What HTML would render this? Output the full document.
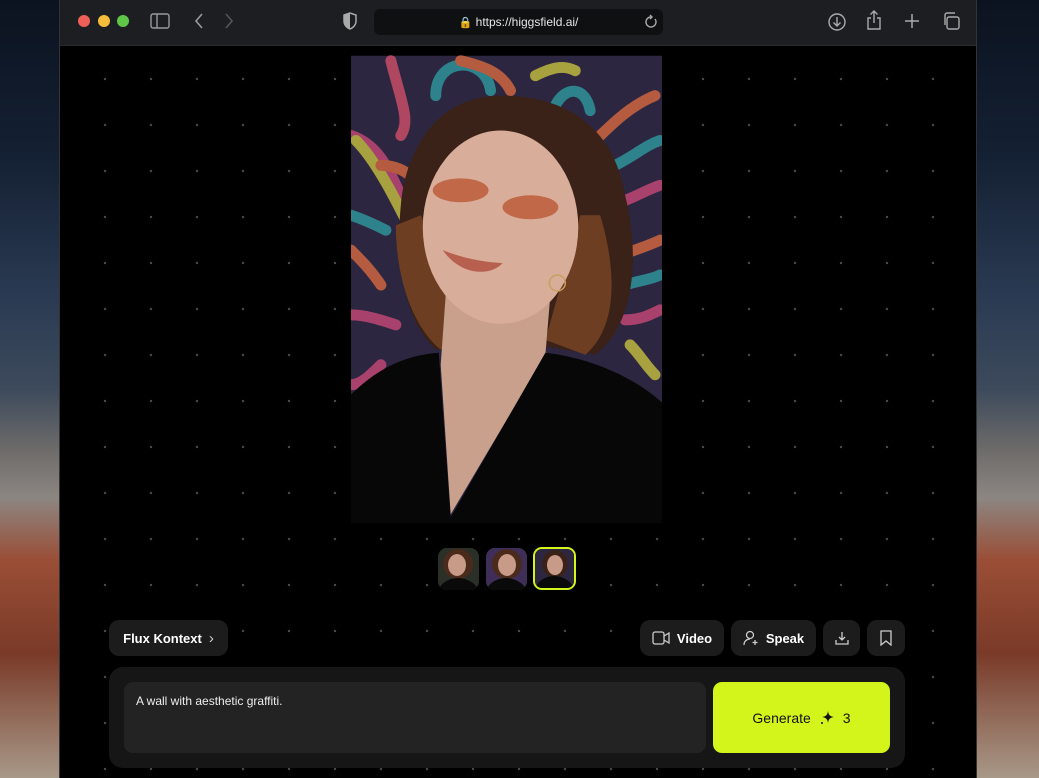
<!DOCTYPE html>
<html><head><meta charset="utf-8"><style>
*{margin:0;padding:0;box-sizing:border-box}
body{width:1039px;height:778px;overflow:hidden;position:relative;font-family:"Liberation Sans",sans-serif;
background:linear-gradient(180deg,#0c1320 0%,#142033 20%,#2a3a52 38%,#3d4a5c 50%,#6e6c6a 58%,#8c8682 64%,#9a4e36 72%,#7a3a28 84%,#a89888 100%)}
.win{position:absolute;left:59px;top:0;width:918px;height:778px;background:#000;border-left:1px solid #333;border-right:1px solid #333}
.bar{position:absolute;left:0;top:0;width:100%;height:46px;background:#1d1e21;border-bottom:1px solid #2a2b2e}
.dot{position:absolute;top:15px;width:12px;height:12px;border-radius:50%}
.url{position:absolute;left:314px;top:9px;width:289px;height:26px;background:#0f1012;border-radius:6px;color:#e5e5e5;font-size:12px;line-height:26px;text-align:center}
.content{position:absolute;left:0;top:47px;width:100%;height:731px;background-color:#000;
background-image:radial-gradient(circle,#4a4a4a 1px,transparent 1.4px);background-size:46px 46px;background-position:22px 9px}
.btn{position:absolute;top:573px;height:36px;background:#1c1c1c;border-radius:10px;color:#fff;font-weight:bold;font-size:13px;display:flex;align-items:center;justify-content:center;gap:7px}
.thumb{position:absolute;top:501px;width:41px;height:42px;border-radius:9px;overflow:hidden;background:#2a2636}
.thumb svg{display:block}
</style></head><body>
<div class="win">
 <div class="bar">
  <div class="dot" style="left:18px;background:#ee5f57"></div>
  <div class="dot" style="left:38px;background:#f4bd3c"></div>
  <div class="dot" style="left:57px;background:#5fc648"></div>
  <svg style="position:absolute;left:90px;top:13px" width="20" height="16" viewBox="0 0 20 16" fill="none" stroke="#9a9a9a" stroke-width="1.4"><rect x="1" y="1" width="18" height="14" rx="2"/><line x1="7" y1="1" x2="7" y2="15"/></svg>
  <svg style="position:absolute;left:133px;top:12px" width="12" height="18" viewBox="0 0 12 18" fill="none" stroke="#9a9a9a" stroke-width="1.6"><path d="M9 2L3 9l6 7"/></svg>
  <svg style="position:absolute;left:163px;top:12px" width="12" height="18" viewBox="0 0 12 18" fill="none" stroke="#555" stroke-width="1.6"><path d="M3 2l6 7-6 7"/></svg>
  <svg style="position:absolute;left:282px;top:12px" width="16" height="18" viewBox="0 0 16 18"><path d="M8 1L2 3v6c0 4 3 7 6 8 3-1 6-4 6-8V3z" fill="none" stroke="#aaa" stroke-width="1.5"/><path d="M8 1L2 3v6c0 4 3 7 6 8z" fill="#aaa"/></svg>
  <div class="url"><span style="font-size:11px">🔒</span> https://higgsfield.ai/</div>
  <svg style="position:absolute;left:584px;top:14px" width="14" height="16" viewBox="0 0 14 16" fill="none" stroke="#aaa" stroke-width="1.4"><path d="M11 5a5 5 0 1 1-4-2"/><path d="M6 1l2 2-2 2"/></svg>
  <svg style="position:absolute;left:767px;top:12px" width="20" height="20" viewBox="0 0 20 20" fill="none" stroke="#aaa" stroke-width="1.4"><circle cx="10" cy="10" r="8"/><path d="M10 5v9M6.5 10.5L10 14l3.5-3.5"/></svg>
  <svg style="position:absolute;left:806px;top:9px" width="16" height="22" viewBox="0 0 16 22" fill="none" stroke="#aaa" stroke-width="1.4"><path d="M5 9H2v11h12V9h-3M8 14V2M4.5 5.5L8 2l3.5 3.5"/></svg>
  <svg style="position:absolute;left:844px;top:13px" width="16" height="16" viewBox="0 0 16 16" stroke="#aaa" stroke-width="1.5"><path d="M8 1v14M1 8h14"/></svg>
  <svg style="position:absolute;left:882px;top:12px" width="18" height="18" viewBox="0 0 18 18" fill="none" stroke="#aaa" stroke-width="1.4"><rect x="5" y="5" width="12" height="12" rx="2"/><path d="M3 13V3a2 2 0 0 1 2-2h8"/></svg>
 </div>
 <div class="content">
  <svg style="position:absolute;left:291px;top:8px" width="311" height="468" viewBox="0 0 312 468">
   <rect width="312" height="468" fill="#2c2640"/>
   <g fill="none" stroke-width="11" stroke-linecap="round" opacity=".8">
    <path d="M40 5c10 40 20 60 10 75" stroke="#d2506a"/>
    <path d="M85 40c0-40 50-40 55-5" stroke="#2e9aa0"/>
    <path d="M0 80c30 10 40 40 50 60" stroke="#c84a78"/>
    <path d="M5 85c20 20 40 60 50 80" stroke="#c8c040"/>
    <path d="M30 110c20 0 30 10 40 20" stroke="#d86a40"/>
    <path d="M185 20c20-10 30-10 40-5" stroke="#c8c040"/>
    <path d="M205 50c10-20 30-20 35 5" stroke="#2e9aa0"/>
    <path d="M240 90c20-20 40-40 65-50" stroke="#d86a40"/>
    <path d="M265 110c20-10 30-20 45-25" stroke="#2e9aa0"/>
    <path d="M260 150c20-5 35-15 50-20" stroke="#c84a78"/>
    <path d="M270 200c15-5 30-10 40-15" stroke="#d86a40"/>
    <path d="M275 230c15-5 25-5 35-10" stroke="#2e9aa0"/>
    <path d="M275 265c15 0 25-5 35-10" stroke="#c84a78"/>
    <path d="M280 290c10 10 15 20 25 30" stroke="#c8c040"/>
    <path d="M0 160c15 5 25 10 35 15" stroke="#2e9aa0"/>
    <path d="M0 195c10 10 20 20 30 35" stroke="#d86a40"/>
    <path d="M0 260c15 0 30 5 45 10" stroke="#c84a78"/>
    <path d="M110 5c20 5 40 10 50 30" stroke="#d86a40"/>
    <path d="M0 330c10 0 20-10 30-20" stroke="#c84a78"/>
    <path d="M0 400c10 0 20-5 25-10" stroke="#d86a40"/>
   </g>
   <path d="M150 40c-60 0-95 50-100 110-5 50 0 110 35 145l70-10 90 15c40-30 45-100 30-160-10-60-50-100-125-100z" fill="#3a2218"/>
   <path d="M45 170c0 50 15 100 45 125l25-25-45-110zM250 160c15 50 20 110-15 140l-40-15 35-125z" fill="#6e3e22"/>
   <path d="M95 240l-5 70 10 150 95-160 5-60z" fill="#c9a08c"/>
   <ellipse cx="150" cy="172" rx="78" ry="97" fill="#d8ad9a"/>
   <ellipse cx="110" cy="135" rx="28" ry="12" fill="#c06848"/>
   <ellipse cx="180" cy="152" rx="28" ry="12" fill="#c06848"/>
   <path d="M92 195c20 8 40 12 60 13c-10 12-40 15-60-13z" fill="#b86050"/>
   <path d="M90 70c30-30 120-30 140 20l-20-10c-30-20-80-20-120 0z" fill="#3a2218"/>
   <circle cx="207" cy="228" r="8" fill="none" stroke="#c9a060" stroke-width="1.5"/>
   <path d="M0 340c30-30 60-40 88-42l12 165 95-165c45 5 90 25 117 50v120H0z" fill="#070707"/>
  </svg>
  <div class="thumb" style="left:378px"><svg width="41" height="42"><rect width="41" height="42" fill="#2a3028"/><ellipse cx="20" cy="16" rx="15" ry="15" fill="#4a2a1a"/><ellipse cx="19" cy="17" rx="9" ry="11" fill="#c89a88"/><path d="M0 42c5-10 15-12 20-12s15 2 21 12z" fill="#0a0a0a"/></svg></div>
  <div class="thumb" style="left:426px"><svg width="41" height="42"><rect width="41" height="42" fill="#3e2e58"/><ellipse cx="21" cy="16" rx="15" ry="15" fill="#4a2a1a"/><ellipse cx="21" cy="17" rx="9" ry="11" fill="#c89a88"/><path d="M0 42c5-10 15-12 20-12s15 2 21 12z" fill="#0a0a0a"/></svg></div>
  <div class="thumb" style="left:473px;width:43px;height:43px;border:2px solid #d4f51c;top:500px"><svg width="39" height="39"><rect width="39" height="39" fill="#2c2640"/><ellipse cx="20" cy="15" rx="13" ry="14" fill="#3a2218"/><ellipse cx="20" cy="16" rx="8" ry="10" fill="#c89a88"/><path d="M0 39c5-10 14-12 19-12s15 2 20 12z" fill="#0a0a0a"/></svg></div>
  <div class="btn" style="left:49px;width:119px">Flux Kontext <span style="font-weight:normal;font-size:15px;color:#ccc">›</span></div>
  <div class="btn" style="left:580px;width:84px"><svg width="18" height="14" viewBox="0 0 18 14" fill="none" stroke="#ccc" stroke-width="1.3"><rect x="1" y="1" width="11" height="12" rx="2"/><path d="M12 5l5-3v10l-5-3"/></svg>Video</div>
  <div class="btn" style="left:671px;width:85px"><svg width="16" height="16" viewBox="0 0 16 16" fill="none" stroke="#ccc" stroke-width="1.3"><circle cx="7" cy="5" r="3.5"/><path d="M1 15c0-4 3-6 6-6M12 10v5M9.5 12.5h5"/></svg>Speak</div>
  <div class="btn" style="left:763px;width:37px"><svg width="14" height="14" viewBox="0 0 14 14" fill="none" stroke="#ccc" stroke-width="1.3"><path d="M7 1v8M4 6l3 3 3-3M1 9v4h12V9"/></svg></div>
  <div class="btn" style="left:807px;width:38px"><svg width="12" height="16" viewBox="0 0 12 16" fill="none" stroke="#ccc" stroke-width="1.3"><path d="M1 1h10v14l-5-4-5 4z"/></svg></div>
  <div style="position:absolute;left:49px;top:620px;width:796px;height:101px;background:#161616;border-radius:14px"></div>
  <div style="position:absolute;left:64px;top:635px;width:582px;height:71px;background:#232323;border-radius:9px;color:#eee;font-size:12px;padding:12px 12px">A wall with aesthetic graffiti.</div>
  <div style="position:absolute;left:653px;top:635px;width:177px;height:71px;background:#d4f51c;border-radius:9px;color:#111;font-size:14px;display:flex;align-items:center;justify-content:center;gap:8px">Generate <svg width="16" height="16" viewBox="0 0 16 16"><path d="M9 1c.5 4 2 5.5 6 6-4 .5-5.5 2-6 6-.5-4-2-5.5-6-6 4-.5 5.5-2 6-6z" fill="#111"/><circle cx="3" cy="13" r="1" fill="#111"/></svg> 3</div>
 </div>
</div>
</body></html>
